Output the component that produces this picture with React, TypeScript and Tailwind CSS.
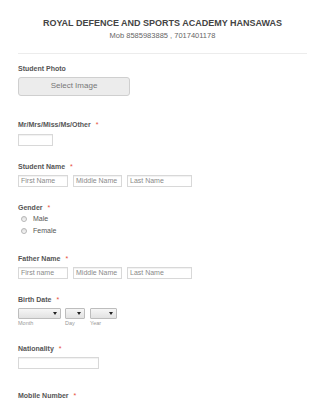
import React from 'react';

const Label: React.FC<{ text: string; required?: boolean; className?: string }> = ({ text, required, className }) => (
    <div className={`flex items-center h-[9px] text-[7px] leading-[9px] font-bold text-[#555] ${className ?? ''}`}>
        <span>{text}</span>
        {required && <span className="ml-[5px] text-[#e74c3c] font-normal">*</span>}
    </div>
);

const TextBox: React.FC<{ placeholder?: string; width: string }> = ({ placeholder, width }) => (
    <div className={`${width} h-[12.5px] border border-[#d8d8d8] bg-white shadow-[inset_0_1px_1px_rgba(0,0,0,0.06)] flex items-center px-[2px] text-[7px] text-[#8a8a8a] leading-none`}>
        {placeholder}
    </div>
);

const Select: React.FC<{ width: string }> = ({ width }) => (
    <div className={`${width} h-[10.5px] border border-[#bdbdbd] rounded-[1px] bg-gradient-to-b from-[#f6f6f6] to-[#e2e2e2] flex items-center justify-end pr-[3px]`}>
        <svg width="4" height="3" viewBox="0 0 4 3">
            <path d="M0 0 L4 0 L2 3 Z" fill="#222" />
        </svg>
    </div>
);

const Radio: React.FC<{ text: string }> = ({ text }) => (
    <div className="flex items-center h-[12px]">
        <span className="ml-[3px] w-[6px] h-[6px] rounded-full border border-[#b5b5b5] bg-gradient-to-b from-[#e0e0e0] to-[#f8f8f8]" />
        <span className="ml-[6px] text-[7px] text-[#555]">{text}</span>
    </div>
);

const App: React.FC = () => {
    return (
        <div className="w-[325px] h-[400px] overflow-hidden bg-white font-['Liberation_Sans',Arial,sans-serif]">
            <div className="px-[18px]">
                {/* Header */}
                <div className="pt-[18px] text-center">
                    <div className="text-[9px] leading-[11px] font-bold text-[#444]">
                        ROYAL DEFENCE AND SPORTS ACADEMY HANSAWAS
                    </div>
                    <div className="mt-[1.5px] text-[7.5px] leading-[9px] text-[#666]">
                        Mob 8585983885 , 7017401178
                    </div>
                </div>
                <div className="mt-[13.5px] w-[289px] border-t border-[#ececec]" />

                {/* Student photo */}
                <Label text="Student Photo" className="mt-[10px]" />
                <div className="mt-[4px] w-[112px] h-[18.5px] rounded-[3px] border border-[#cfcfcf] bg-[#ececec] flex items-center justify-center text-[8px] text-[#777]">
                    Select Image
                </div>

                {/* Title */}
                <Label text="Mr/Mrs/Miss/Ms/Other" required className="mt-[24.5px]" />
                <div className="mt-[4.5px]">
                    <TextBox width="w-[35px]" />
                </div>

                {/* Student name */}
                <Label text="Student Name" required className="mt-[15.5px]" />
                <div className="mt-[4px] flex gap-[5px]">
                    <TextBox placeholder="First Name" width="w-[50px]" />
                    <TextBox placeholder="Middle Name" width="w-[49px]" />
                    <TextBox placeholder="Last Name" width="w-[65px]" />
                </div>

                {/* Gender */}
                <Label text="Gender" required className="mt-[15.5px]" />
                <div className="mt-[1.5px]">
                    <Radio text="Male" />
                    <Radio text="Female" />
                </div>

                {/* Father name */}
                <Label text="Father Name" required className="mt-[16.5px]" />
                <div className="mt-[4px] flex gap-[5px]">
                    <TextBox placeholder="First name" width="w-[50px]" />
                    <TextBox placeholder="Middle Name" width="w-[49px]" />
                    <TextBox placeholder="Last Name" width="w-[65px]" />
                </div>

                {/* Birth date */}
                <Label text="Birth Date" required className="mt-[16px]" />
                <div className="mt-[4px] flex gap-[4px]">
                    <div className="flex flex-col">
                        <Select width="w-[43px]" />
                        <span className="mt-[1px] text-[5.5px] leading-[6px] text-[#999]">Month</span>
                    </div>
                    <div className="flex flex-col">
                        <Select width="w-[20px]" />
                        <span className="mt-[1px] text-[5.5px] leading-[6px] text-[#999]">Day</span>
                    </div>
                    <div className="flex flex-col ml-[1px]">
                        <Select width="w-[27px]" />
                        <span className="mt-[1px] text-[5.5px] leading-[6px] text-[#999]">Year</span>
                    </div>
                </div>

                {/* Nationality */}
                <Label text="Nationality" required className="mt-[18px]" />
                <div className="mt-[4px]">
                    <TextBox width="w-[81px]" />
                </div>

                {/* Mobile */}
                <Label text="Mobile Number" required className="mt-[22px]" />
            </div>
        </div>
    );
};

export default App;
